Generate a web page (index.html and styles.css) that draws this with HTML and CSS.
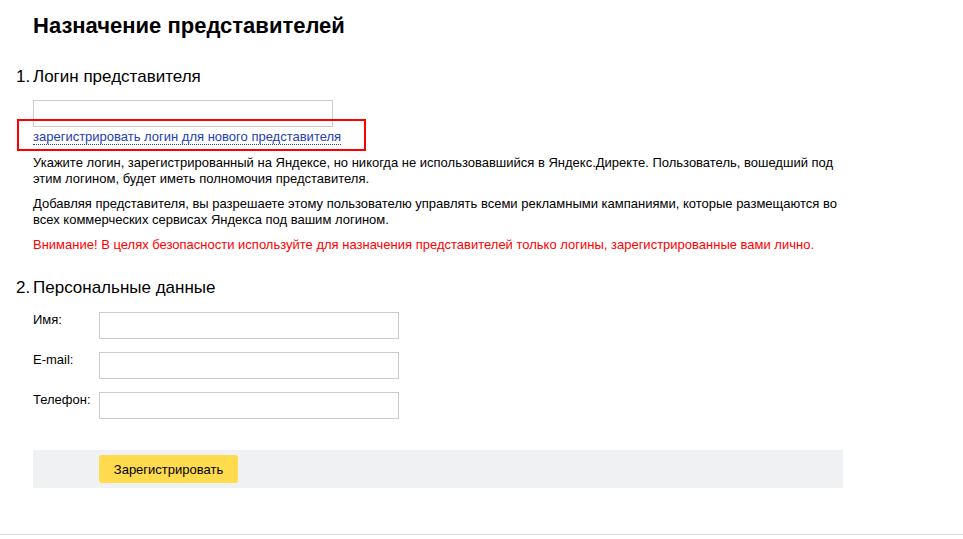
FILE: index.html
```html
<!DOCTYPE html>
<html lang="ru">
<head>
<meta charset="utf-8">
<title>Назначение представителей</title>
<link rel="stylesheet" href="styles.css">
</head>
<body>
<div class="page">
  <h1 class="title">Назначение представителей</h1>

  <h2 class="section-h"><span class="num">1.</span>Логин представителя</h2>
  <input class="field login-field" type="text">
  <div class="link-box">
    <a class="reg-link" href="#">зарегистрировать логин для нового представителя</a>
  </div>
  <p class="note">Укажите логин, зарегистрированный на Яндексе, но никогда не использовавшийся в Яндекс.Директе. Пользователь, вошедший под этим логином, будет иметь полномочия представителя.</p>
  <p class="note">Добавляя представителя, вы разрешаете этому пользователю управлять всеми рекламными кампаниями, которые размещаются во всех коммерческих сервисах Яндекса под вашим логином.</p>
  <p class="note warn">Внимание! В целях безопасности используйте для назначения представителей только логины, зарегистрированные вами лично.</p>

  <h2 class="section-h sec2"><span class="num">2.</span>Персональные данные</h2>
  <div class="form-grid">
    <label class="lbl">Имя:</label><input class="field" type="text">
    <label class="lbl">E-mail:</label><input class="field" type="text">
    <label class="lbl">Телефон:</label><input class="field" type="text">
  </div>

  <div class="actions">
    <button class="btn" type="button">Зарегистрировать</button>
  </div>
</div>
<div class="bottom-line"></div>
</body>
</html>
```

FILE: styles.css
```css
html, body {
  margin: 0;
  padding: 0;
  background: #fff;
}
body {
  font-family: "Liberation Sans", Arial, sans-serif;
  font-size: 13px;
  color: #000;
  height: 539px;
  position: relative;
  overflow: hidden;
}
.page {
  padding: 13px 0 0 33px;
  width: 810px;
}
.title {
  margin: 0;
  font-size: 22px;
  font-weight: bold;
  line-height: 26px;
}
.section-h {
  margin: 28px 0 0 -17px;
  font-size: 17px;
  font-weight: normal;
  line-height: 20px;
}
.section-h .num {
  display: inline-block;
  width: 17px;
}
.field {
  display: block;
  box-sizing: border-box;
  width: 300px;
  height: 27px;
  border: 1px solid #cccccc;
  background: #fff;
  margin: 0;
  padding: 0 6px;
  font: inherit;
  outline: none;
}
.login-field {
  margin-top: 13px;
}
.link-box {
  margin: -8px 0 0 -16px;
  width: 331px;
  height: 28px;
  border: 2px solid #f00;
  box-sizing: content-box;
  padding: 0 0 0 14px;
  display: flex;
  align-items: center;
}
.reg-link {
  color: #2440b3;
  text-decoration: none;
  border-bottom: 1px dotted #2440b3;
  line-height: 14px;
  padding-top: 4px;
}
.note {
  margin: 4px 0 9px;
  line-height: 16px;
  color: #000;
}
.note + .note {
  margin-top: 9px;
}
.warn {
  color: #ff0000;
}
.sec2 {
  margin-top: 25px;
}
.form-grid {
  display: grid;
  grid-template-columns: 66px 300px;
  row-gap: 13px;
  margin-top: 14px;
  align-items: start;
}
.lbl {
  padding-top: 1px;
  line-height: 14px;
}
.actions {
  margin-top: 31px;
  background: #f0f1f3;
  height: 38px;
  box-sizing: border-box;
  padding: 5px 0 0 66px;
}
.btn {
  width: 139px;
  height: 28px;
  border: none;
  border-radius: 3px;
  background: #ffdb4d;
  font: inherit;
  color: #000;
  padding: 0;
  cursor: pointer;
}
.bottom-line {
  position: absolute;
  left: 0;
  right: 0;
  top: 534px;
  height: 1px;
  background: #dddddd;
}
```
